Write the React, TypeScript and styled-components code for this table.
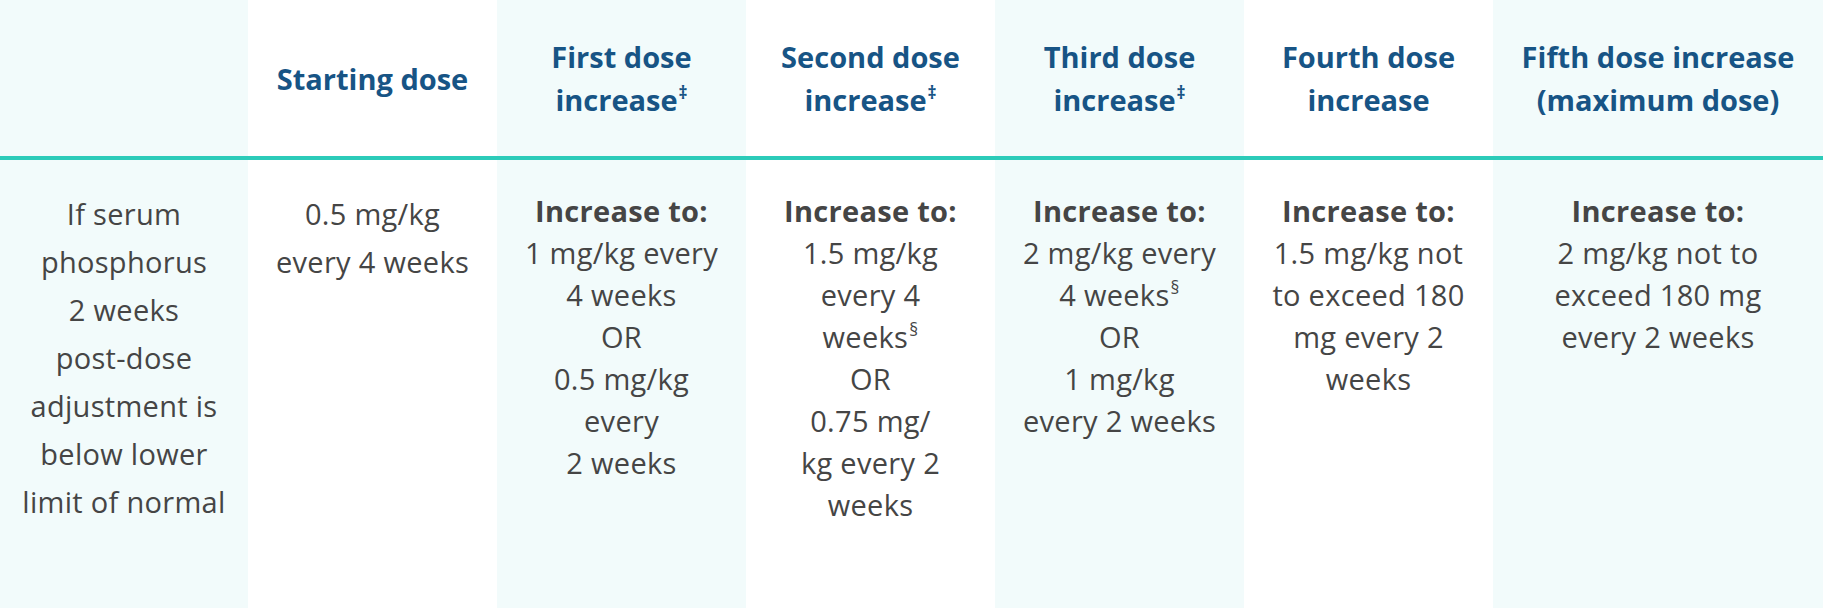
import React from "react";
import styled, { createGlobalStyle } from "styled-components";

const GlobalStyle = createGlobalStyle`
  html, body {
    margin: 0;
    padding: 0;
    background: #ffffff;
  }
  body {
    font-family: "Open Sans", Lato, sans-serif;
    -webkit-font-smoothing: antialiased;
  }
`;

const Table = styled.div`
  display: grid;
  grid-template-columns: 248px repeat(5, 249px) 1fr;
  grid-template-rows: 160px 448px;
  width: 1823px;
  height: 608px;
`;

const Cell = styled.div<{ $shaded: boolean }>`
  background: ${(p) => (p.$shaded ? "#f2fbfb" : "#ffffff")};
  text-align: center;
`;

const HeadCell = styled(Cell)`
  display: flex;
  align-items: center;
  justify-content: center;
  border-bottom: 4px solid #2ccbb9;
  padding: 0 6px;
  color: #175485;
  font-weight: 700;
  font-size: 29px;
  line-height: 43px;
`;

const BodyCell = styled(Cell)<{ $loose?: boolean }>`
  padding: 30px 4px 0;
  color: #454545;
  font-size: 29px;
  letter-spacing: 0.3px;
  line-height: ${(p) => (p.$loose ? "48px" : "42px")};
`;

const Line = styled.div<{ $bold?: boolean }>`
  font-weight: ${(p) => (p.$bold ? 700 : "inherit")};
  white-space: nowrap;
`;

const Mark = styled.sup`
  font-size: 0.6em;
  line-height: 0;
  vertical-align: 0;
  position: relative;
  top: -0.7em;
  margin-left: 1px;
`;

type Column = {
  head: React.ReactNode[];
  body: React.ReactNode[];
  lead?: boolean;
  loose?: boolean;
};

const dagger = <Mark>‡</Mark>;
const section = <Mark>§</Mark>;

const columns: Column[] = [
  {
    head: [],
    loose: true,
    body: [
      "If serum",
      "phosphorus",
      "2 weeks",
      "post-dose",
      "adjustment is",
      "below lower",
      "limit of normal",
    ],
  },
  {
    head: ["Starting dose"],
    loose: true,
    body: ["0.5 mg/kg", "every 4 weeks"],
  },
  {
    head: ["First dose", <>increase{dagger}</>],
    lead: true,
    body: ["1 mg/kg every", "4 weeks", "OR", "0.5 mg/kg", "every", "2 weeks"],
  },
  {
    head: ["Second dose", <>increase{dagger}</>],
    lead: true,
    body: [
      "1.5 mg/kg",
      "every 4",
      <>weeks{section}</>,
      "OR",
      "0.75 mg/",
      "kg every 2",
      "weeks",
    ],
  },
  {
    head: ["Third dose", <>increase{dagger}</>],
    lead: true,
    body: [
      "2 mg/kg every",
      <>4 weeks{section}</>,
      "OR",
      "1 mg/kg",
      "every 2 weeks",
    ],
  },
  {
    head: ["Fourth dose", "increase"],
    lead: true,
    body: ["1.5 mg/kg not", "to exceed 180", "mg every 2", "weeks"],
  },
  {
    head: ["Fifth dose increase", "(maximum dose)"],
    lead: true,
    body: ["2 mg/kg not to", "exceed 180 mg", "every 2 weeks"],
  },
];

const App: React.FC = (): JSX.Element => {
  return (
    <>
      <GlobalStyle />
      <Table>
        {columns.map((col, i) => (
          <HeadCell key={`h${i}`} $shaded={i % 2 === 0} style={{ gridColumn: i + 1, gridRow: 1 }}>
            <div>
              {col.head.map((line, j) => (
                <Line key={j}>{line}</Line>
              ))}
            </div>
          </HeadCell>
        ))}
        {columns.map((col, i) => (
          <BodyCell
            key={`b${i}`}
            $shaded={i % 2 === 0}
            $loose={col.loose}
            style={{ gridColumn: i + 1, gridRow: 2 }}
          >
            {col.lead && <Line $bold>Increase to:</Line>}
            {col.body.map((line, j) => (
              <Line key={j}>{line}</Line>
            ))}
          </BodyCell>
        ))}
      </Table>
    </>
  );
};

export default App;
